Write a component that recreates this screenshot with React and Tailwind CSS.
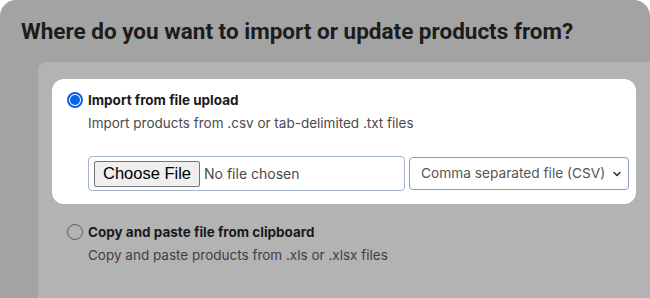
import React from 'react';

const Radio = ({ checked }) =>
  checked ? (
    <span className="mt-[1px] flex h-[16px] w-[16px] shrink-0 items-center justify-center rounded-full border-2 border-[#0b62e8] bg-white">
      <span className="h-[10px] w-[10px] rounded-full bg-[#0b62e8]" />
    </span>
  ) : (
    <span className="mt-[1px] block h-[16px] w-[16px] shrink-0 rounded-full border border-[#5f5f5f]" />
  );

const App = () => {
  return (
    <div className="h-[298px] w-[650px] overflow-hidden bg-white" style={{ fontFamily: 'Inter, "Noto Sans", sans-serif' }}>
      <div className="flex h-full flex-col rounded-t-[16px] bg-[#a3a3a3]">
        {/* Heading */}
        <h1 className="pl-[21px] pt-[18px] text-[22.5px] font-bold leading-[27px] text-[#1c1c1c]" style={{ fontFamily: 'Roboto, sans-serif' }}>
          Where do you want to import or update products from?
        </h1>

        {/* Options panel */}
        <div className="ml-[38px] mt-[17px] flex-1 rounded-tl-[8px] bg-[#b3b3b3] px-[14px] pt-[17px]">
          <div className="rounded-[12px] bg-white pb-[13px] pl-[15px] pr-[9px] pt-[12px]">
            <div className="flex items-start gap-[5px]">
              <Radio checked />
              <div className="flex-1">
                <div className="text-[13.5px] font-bold leading-[18px] text-[#1a1a1a]">Import from file upload</div>
                <div className="mt-[5px] text-[13.5px] leading-[18px] text-[#4a4a4a]">
                  Import products from .csv or tab-delimited .txt files
                </div>
                <div className="mt-[24px] flex items-center gap-[4px]">
                  <div className="flex h-[35px] w-[317px] items-center gap-[4px] rounded-[4px] border border-[#a5b3cc] px-[5px]">
                    <button
                      className="h-[26px] rounded-[2px] border border-[#767676] bg-[#efefef] px-[8px] text-[16.5px] leading-none text-black"
                      style={{ fontFamily: '"Liberation Sans", Arial, sans-serif' }}
                    >
                      Choose File
                    </button>
                    <span className="text-[14px] text-[#4a4a4a]">No file chosen</span>
                  </div>
                  <div className="flex h-[33px] w-[220px] items-center justify-between rounded-[4px] border border-[#8d9dc0] pl-[11px] pr-[6px]">
                    <span className="text-[13.7px] text-[#555555]">Comma separated file (CSV)</span>
                    <svg width="10" height="10" viewBox="0 0 10 10" fill="none">
                      <path d="M2 3.5 L5 6.5 L8 3.5" stroke="#333" strokeWidth="1.6" strokeLinecap="round" strokeLinejoin="round" />
                    </svg>
                  </div>
                </div>
              </div>
            </div>
          </div>

          <div className="mt-[19px] flex items-start gap-[5px] pl-[15px]">
            <Radio />
            <div>
              <div className="text-[13.5px] font-bold leading-[18px] text-[#1a1a1a]">Copy and paste file from clipboard</div>
              <div className="mt-[5px] text-[13.5px] leading-[18px] text-[#3f3f3f]">Copy and paste products from .xls or .xlsx files</div>
            </div>
          </div>
        </div>
      </div>
    </div>
  );
};

export default App;
